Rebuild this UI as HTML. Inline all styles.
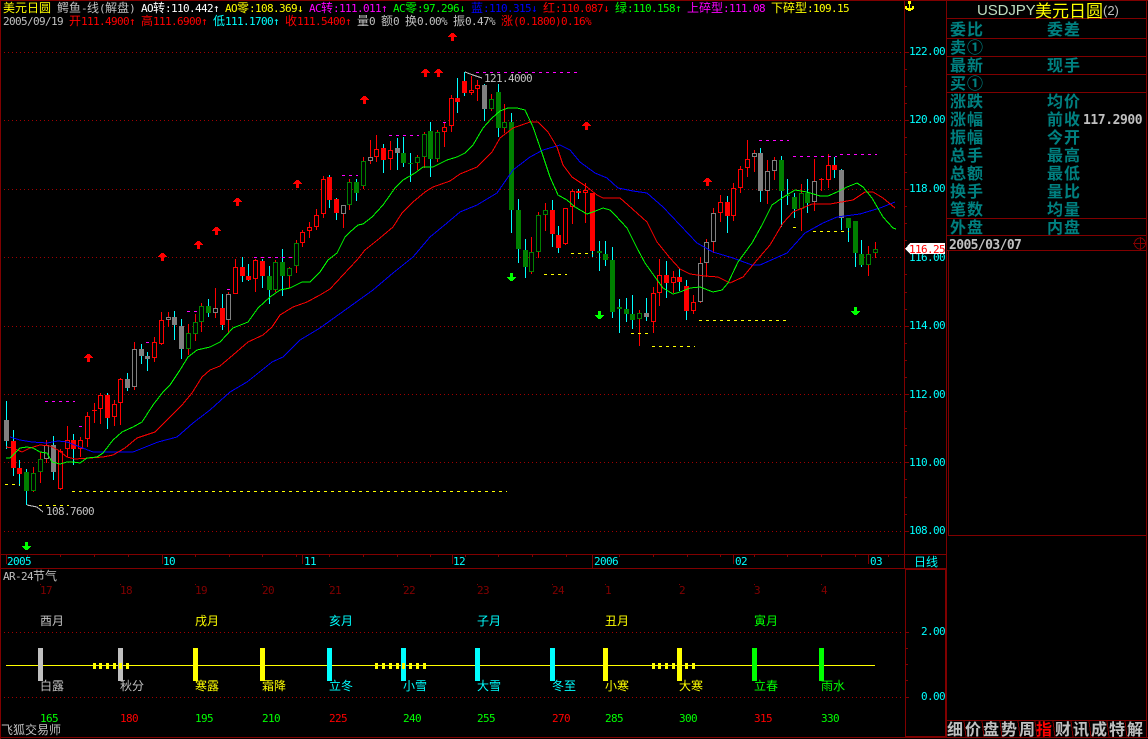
<!DOCTYPE html>
<html><head><meta charset="utf-8"><title>USDJPY</title>
<style>
html,body{margin:0;padding:0;background:#000;width:1148px;height:739px;overflow:hidden}
svg{display:block}
text{font-family:"DejaVu Sans Mono","Liberation Mono",monospace;font-size:11px;letter-spacing:-.62px;fill:#c0c0c0;white-space:pre}
.c{font-family:"WenQuanYi Zen Hei","Noto Sans CJK SC",sans-serif;font-size:12px;letter-spacing:0}
text.c{font-family:"WenQuanYi Zen Hei","Noto Sans CJK SC",sans-serif;font-size:12px;letter-spacing:0}
text.p{font-family:"WenQuanYi Zen Hei","Noto Sans CJK SC",sans-serif;font-size:16px;letter-spacing:1px;fill:#008080;font-weight:bold}
text.b{font-family:"WenQuanYi Zen Hei","Noto Sans CJK SC",sans-serif;font-size:16px;letter-spacing:0;fill:#c0c0c0;font-weight:bold}
.y{fill:#ff0}.w{fill:#fff}.m{fill:#f0f}.l{fill:#0f0}.bl{fill:#00f}.r{fill:#f00}.a{fill:#0ff}.d{fill:#800000}
text.y{fill:#ff0}text.w{fill:#fff}text.m{fill:#f0f}text.l{fill:#0f0}text.bl{fill:#00f}text.r{fill:#f00}text.a{fill:#0ff}text.d{fill:#800000}
</style></head>
<body>
<svg width="1148" height="739" viewBox="0 0 1148 739" xmlns="http://www.w3.org/2000/svg">
<defs>
<path id="ua" d="M-1 0h3v1h1v1h1v1h1v1h-3v4h-3v-4h-3v-1h1v-1h1v-1h1z"/>
<path id="da" d="M-1 0h3v4h3v1h-1v1h-1v1h-1v1h-3v-1h-1v-1h-1v-1h-1v-1h3z"/>
</defs>
<rect width="1148" height="739" fill="#000"/>

<!-- frames -->
<g fill="#800000" shape-rendering="crispEdges">
<rect x="0" y="0" width="1148" height="1"/>
<rect x="0" y="0" width="1" height="739"/>
<rect x="0" y="737" width="1148" height="1"/>
<rect x="1146" y="0" width="1" height="738"/>
<rect x="904" y="0" width="1" height="568"/>
<rect x="946" y="0" width="1" height="738"/>
<rect x="0" y="554" width="947" height="1"/>
<rect x="0" y="568" width="905" height="1"/>
<rect x="905" y="568" width="41" height="2"/>
<rect x="905" y="568" width="1" height="170"/>
<rect x="945" y="568" width="1" height="170"/>
<rect x="905" y="736" width="41" height="2"/>
<rect x="947" y="18" width="199" height="1"/>
<rect x="947" y="38" width="199" height="1"/>
<rect x="947" y="56" width="199" height="1"/>
<rect x="947" y="74" width="199" height="1"/>
<rect x="947" y="92" width="199" height="1"/>
<rect x="947" y="218" width="199" height="1"/>
<rect x="947" y="235" width="199" height="1"/>
<rect x="947" y="250" width="199" height="1"/>
<rect x="948" y="250" width="1" height="285"/>
<rect x="948" y="535" width="198" height="1"/>
<rect x="947" y="720" width="199" height="1"/>
</g>

<!-- grid -->
<g stroke="#a00000" stroke-width="1" stroke-dasharray="1 3" shape-rendering="crispEdges" fill="none">
<path d="M4 52.5H904M4 120.5H904M4 189.5H904M4 257.5H904M4 326.5H904M4 394.5H904M4 462.5H904M4 531.5H904M4 632.5H904M4 697.5H904"/>
</g>

<!-- axis ticks -->
<g stroke="#800000" fill="none" shape-rendering="crispEdges">
<path d="M905 52.5H909M905 120.5H909M905 189.5H909M905 326.5H909M905 394.5H909M905 462.5H909M905 531.5H909M905 69.5H907M905 86.5H907M905 103.5H907M905 137.5H907M905 154.5H907M905 172.5H907M905 206.5H907M905 223.5H907M905 240.5H907M905 274.5H907M905 292.5H907M905 309.5H907M905 343.5H907M905 360.5H907M905 377.5H907M905 411.5H907M905 428.5H907M905 445.5H907M905 479.5H907M905 497.5H907M905 514.5H907"/>
<path d="M905 632.5H909M906 648.5H908M906 664.5H908M906 680.5H908M905 697.5H909"/>
<path d="M6.5 555V564M162.5 555V564M302.5 555V564M452.5 555V564M592.5 555V568M733.5 555V564M868.5 555V564"/>
<path d="M27.5 555V557M60.5 555V557M94.5 555V557M128.5 555V557M195.5 555V557M229.5 555V557M262.5 555V557M296.5 555V557M329.5 555V557M363.5 555V557M397.5 555V557M430.5 555V557M465.5 555V557M498.5 555V557M532.5 555V557M566.5 555V557M619.5 555V557M653.5 555V557M687.5 555V557M720.5 555V557M754.5 555V557M787.5 555V557M821.5 555V557M855.5 555V557M888.5 555V557"/>
</g>

<!-- candle wicks -->
<g fill="none" stroke-width="1" shape-rendering="crispEdges">
<path stroke="#0ff" d="M6.5 401V449M13.5 430V476M19.5 460V486M26.5 469V505M53.5 436V480M73.5 434V465M107.5 393V429M127.5 373V391M141.5 344V364M147.5 352V371M174.5 311V340M181.5 319V359M208.5 299V317M222.5 294V330M242.5 257V282M248.5 264V281M262.5 259V288M269.5 266V304M282.5 249V296M329.5 175V208M336.5 198V220M356.5 179V201M383.5 144V173M397.5 138V170M403.5 137V167M410.5 153V182M430.5 122V177M457.5 78V113M464.5 72V96M484.5 84V121M498.5 84V137M511.5 113V233M518.5 199V263M525.5 239V278M552.5 200V247M558.5 226V253M578.5 189V199M592.5 193V257M599.5 241V271M605.5 241V266M612.5 247V318M619.5 299V333M626.5 298V322M632.5 295V329M646.5 298V321M666.5 261V298M679.5 268V291M686.5 280V320M727.5 196V233M760.5 148V202M781.5 156V227M787.5 179V205M794.5 193V218M807.5 179V213M834.5 157V178M841.5 169V230M848.5 218V242M855.5 221V267M861.5 240V267"/>
<path stroke="#f00" d="M33.5 467V492M40.5 452V483M46.5 440V463M60.5 449V490M67.5 426V457M80.5 437V457M87.5 412V447M94.5 403V423M100.5 393V424M114.5 400V426M120.5 378V425M134.5 342V390M154.5 337V362M161.5 312V345M168.5 312V327M188.5 324V355M195.5 314V341M201.5 303V332M215.5 288V318M228.5 292V333M235.5 259V294M255.5 259V292M275.5 260V292M289.5 267V288M296.5 240V273M302.5 230V247M309.5 222V238M316.5 209V230M323.5 176V218M343.5 205V228M349.5 179V210M363.5 157V189M370.5 140V164M376.5 135V162M390.5 141V170M417.5 155V170M424.5 132V168M437.5 130V162M444.5 123V147M451.5 95V132M471.5 76V95M477.5 80V101M491.5 94V111M504.5 104V133M531.5 237V274M538.5 212V258M545.5 203V231M565.5 208V245M572.5 189V224M585.5 183V223M639.5 310V346M653.5 287V333M659.5 259V306M673.5 271V293M693.5 295V314M700.5 257V303M706.5 239V277M713.5 208V253M720.5 195V222M733.5 183V221M740.5 166V193M747.5 140V177M754.5 150V172M767.5 160V204M774.5 157V180M801.5 184V231M814.5 159V211M821.5 178V191M828.5 154V188M868.5 246V276M875.5 242V258"/>
</g>

<!-- candle bodies -->
<g shape-rendering="crispEdges">
<path fill="#f00" d="M11 441h5V468h-5zM17 468h5V474h-5zM71 440h5V449h-5zM92 410h5V411h-5zM105 395h5V418h-5zM220 308h5V325h-5zM240 267h5V276h-5zM246 276h5V280h-5zM260 261h5V276h-5zM327 177h5V200h-5zM334 199h5V213h-5zM381 148h5V160h-5zM455 98h5V102h-5zM462 81h5V93h-5zM550 210h5V234h-5zM556 235h5V248h-5zM576 191h5V193h-5zM590 193h5V251h-5zM664 275h5V283h-5zM677 277h5V282h-5zM684 286h5V311h-5zM725 202h5V216h-5zM819 179h5V180h-5zM832 165h5V170h-5z"/>
<path fill="#008000" d="M24 472h5V491h-5zM206 306h5V313h-5zM267 276h5V290h-5zM280 262h5V276h-5zM354 182h5V193h-5zM401 153h5V163h-5zM408 163h5V164h-5zM428 131h5V159h-5zM496 92h5V128h-5zM509 122h5V210h-5zM516 210h5V249h-5zM523 250h5V267h-5zM597 251h5V253h-5zM603 254h5V260h-5zM610 260h5V312h-5zM617 307h5V309h-5zM624 309h5V314h-5zM630 314h5V320h-5zM779 160h5V191h-5zM785 195h5V196h-5zM792 197h5V209h-5zM805 193h5V203h-5zM846 218h5V228h-5zM853 221h5V253h-5zM859 254h5V265h-5z"/>
<path fill="#808080" d="M4 420h5V441h-5zM51 445h5V472h-5zM125 379h5V388h-5zM139 349h5V356h-5zM145 356h5V359h-5zM172 317h5V325h-5zM179 326h5V349h-5zM395 148h5V153h-5zM482 85h5V109h-5zM644 313h5V317h-5zM758 153h5V191h-5zM839 170h5V218h-5z"/>
<path fill="#000" stroke="#f00" d="M58.5 451.5h4V488.5h-4zM65.5 440.5h4V448.5h-4zM78.5 440.5h4V448.5h-4zM85.5 416.5h4V438.5h-4zM98.5 395.5h4V408.5h-4zM112.5 404.5h4V416.5h-4zM118.5 379.5h4V402.5h-4zM152.5 342.5h4V357.5h-4zM159.5 320.5h4V343.5h-4zM233.5 267.5h4V293.5h-4zM253.5 260.5h4V278.5h-4zM300.5 232.5h4V242.5h-4zM307.5 227.5h4V230.5h-4zM314.5 215.5h4V226.5h-4zM321.5 179.5h4V213.5h-4zM374.5 149.5h4V156.5h-4zM388.5 150.5h4V158.5h-4zM442.5 127.5h4V131.5h-4zM449.5 98.5h4V125.5h-4zM469.5 90.5h4V92.5h-4zM475.5 85.5h4V88.5h-4zM563.5 208.5h4V243.5h-4zM570.5 191.5h4V206.5h-4zM583.5 190.5h4V192.5h-4zM651.5 293.5h4V321.5h-4zM657.5 275.5h4V292.5h-4zM671.5 277.5h4V282.5h-4zM691.5 302.5h4V310.5h-4zM718.5 202.5h4V212.5h-4zM731.5 188.5h4V215.5h-4zM738.5 169.5h4V187.5h-4zM745.5 159.5h4V167.5h-4zM826.5 165.5h4V179.5h-4z"/>
<path fill="#000" stroke="#008000" d="M31.5 473.5h4V490.5h-4zM38.5 459.5h4V471.5h-4zM186.5 333.5h4V348.5h-4zM193.5 322.5h4V333.5h-4zM199.5 306.5h4V321.5h-4zM273.5 262.5h4V289.5h-4zM287.5 268.5h4V275.5h-4zM294.5 243.5h4V265.5h-4zM347.5 182.5h4V204.5h-4zM361.5 161.5h4V185.5h-4zM415.5 157.5h4V162.5h-4zM422.5 134.5h4V156.5h-4zM435.5 132.5h4V158.5h-4zM489.5 99.5h4V108.5h-4zM502.5 122.5h4V127.5h-4zM529.5 252.5h4V271.5h-4zM536.5 215.5h4V251.5h-4zM543.5 210.5h4V214.5h-4zM637.5 313.5h4V318.5h-4zM799.5 193.5h4V208.5h-4zM866.5 254.5h4V264.5h-4zM873.5 249.5h4V252.5h-4z"/>
<path fill="#000" stroke="#808080" d="M44.5 445.5h4V458.5h-4zM132.5 349.5h4V386.5h-4zM166.5 317.5h4V319.5h-4zM213.5 308.5h4V312.5h-4zM226.5 294.5h4V319.5h-4zM341.5 205.5h4V213.5h-4zM368.5 157.5h4V160.5h-4zM698.5 263.5h4V301.5h-4zM704.5 242.5h4V262.5h-4zM711.5 213.5h4V241.5h-4zM752.5 153.5h4V156.5h-4zM765.5 171.5h4V190.5h-4zM772.5 160.5h4V170.5h-4zM812.5 181.5h4V201.5h-4z"/>
</g>

<!-- moving averages -->
<g fill="none" stroke-width="1" shape-rendering="crispEdges">
<polyline stroke="#0000ff" points="10,437 20,440 32,442 47,443 58,441 67,442 80,447 93,452 107,452 133,452 143,448 158,442 177,437 193,423 210,410 230,392 247,382 272,362 283,357 300,340 320,328 373,290 393,273 413,257 430,237 447,223 460,212 477,205 497,193 513,170 530,157 543,150 560,145 570,150 580,162 595,173 607,178 618,188 633,191 647,193 663,207 680,225 697,243 713,252 733,258 752,265 760,265 787,253 805,233 823,223 837,217 860,214 880,208 895,202"/>
<polyline stroke="#ff0000" points="6,447 13,448 22,452 30,448 40,445 50,446 58,450 67,457 75,459 90,458 103,457 113,455 125,448 137,438 155,432 170,417 182,405 192,393 202,377 210,370 220,366 233,355 248,342 263,335 272,327 280,315 293,307 307,302 320,295 330,289 343,275 357,260 365,250 380,238 393,227 402,213 413,202 425,192 433,187 450,181 460,174 477,167 492,152 500,138 513,128 530,122 538,122 548,132 557,147 563,165 572,177 587,187 597,195 603,198 620,198 628,205 647,222 657,242 670,258 680,269 690,274 705,276 718,277 730,283 743,277 757,260 770,245 783,223 793,212 812,204 830,204 853,200 865,192 873,192 883,198 895,208"/>
<polyline stroke="#00ff00" points="6,458 10,458 15,453 20,448 27,447 33,448 40,452 47,453 52,462 60,464 67,462 73,462 80,463 87,458 97,457 103,453 113,440 122,432 133,427 142,422 153,405 163,392 170,385 180,370 188,357 197,350 210,347 220,342 233,328 248,322 258,308 270,297 280,290 290,288 302,282 310,282 320,272 328,260 337,253 345,237 350,232 358,225 363,224 372,217 383,205 395,188 403,180 415,173 423,167 433,167 447,160 457,157 465,153 473,145 483,128 492,118 500,111 508,108 517,108 525,110 533,127 542,153 550,177 558,195 567,200 575,207 587,214 593,212 603,208 610,210 615,215 627,228 637,248 645,263 655,277 663,288 673,294 680,292 690,288 700,287 713,292 722,290 728,283 738,262 752,243 762,225 772,205 782,198 795,190 807,192 820,196 828,196 837,192 847,187 857,183 863,187 872,198 883,217 893,228 896,229"/>
</g>

<!-- fractal dashes -->
<g fill="none" stroke-dasharray="3 4" shape-rendering="crispEdges">
<path stroke="#f0f" d="M45 401.5H75M79 426.5H82M146 342.5H149M187 311.5H197M227 289.5H230M254 257.5H292M342 175.5H358M389 135.5H419M443 122.5H446M476 72.5H580M759 140.5H789M793 156.5H837M840 154.5H877"/>
<path stroke="#ff0" d="M5 484.5H20M39 505.5H69M72 491.5H507M544 274.5H567M571 253.5H593M631 333.5H648M652 346.5H695M699 320.5H790M793 227.5H800M813 231.5H849"/>
</g>

<!-- arrows -->
<g fill="#f00" shape-rendering="crispEdges">
<use href="#ua" x="452" y="33"/><use href="#ua" x="425" y="69"/><use href="#ua" x="438" y="69"/><use href="#ua" x="364" y="96"/><use href="#ua" x="586" y="122"/><use href="#ua" x="707" y="178"/><use href="#ua" x="297" y="180"/><use href="#ua" x="237" y="198"/><use href="#ua" x="216" y="227"/><use href="#ua" x="198" y="241"/><use href="#ua" x="162" y="253"/><use href="#ua" x="88" y="354"/>
</g>
<g fill="#0f0" shape-rendering="crispEdges">
<use href="#da" x="511" y="273"/><use href="#da" x="599" y="311"/><use href="#da" x="855" y="307"/><use href="#da" x="26" y="542"/>
</g>

<!-- leaders -->
<polyline fill="none" stroke="#c0c0c0" shape-rendering="crispEdges" points="465,72 473,75 482,78"/>
<polyline fill="none" stroke="#c0c0c0" shape-rendering="crispEdges" points="27,505 37,507 43,512"/>
<text x="484" y="82">121.4000</text>
<text x="46" y="515">108.7600</text>

<!-- header lines -->
<text x="3" y="12" class="c y">美元日圆</text>
<text x="57" y="12"><tspan class="c">鳄鱼</tspan>-<tspan class="c">线</tspan>(<tspan class="c">解盘</tspan>)</text>
<text x="141" y="12" class="w">AO<tspan class="c w">转</tspan>:110.442↑</text>
<text x="225" y="12" class="y">AO<tspan class="c y">零</tspan>:108.369↓</text>
<text x="309" y="12" class="m">AC<tspan class="c m">转</tspan>:111.011↑</text>
<text x="393" y="12" class="l">AC<tspan class="c l">零</tspan>:97.296↓</text>
<text x="471" y="12" class="bl"><tspan class="c bl">蓝</tspan>:110.315↓</text>
<text x="543" y="12" class="r"><tspan class="c r">红</tspan>:110.087↓</text>
<text x="615" y="12" class="l"><tspan class="c l">绿</tspan>:110.158↑</text>
<text x="687" y="12" class="m"><tspan class="c m">上碎型</tspan>:111.08</text>
<text x="771" y="12" class="y"><tspan class="c y">下碎型</tspan>:109.15</text>

<text x="3" y="25">2005/09/19</text>
<text x="69" y="25" class="r"><tspan class="c r">开</tspan>111.4900↑</text>
<text x="141" y="25" class="r"><tspan class="c r">高</tspan>111.6900↑</text>
<text x="213" y="25" class="a"><tspan class="c a">低</tspan>111.1700↑</text>
<text x="285" y="25" class="r"><tspan class="c r">收</tspan>111.5400↑</text>
<text x="357" y="25"><tspan class="c">量</tspan>0</text>
<text x="381" y="25"><tspan class="c">额</tspan>0</text>
<text x="405" y="25"><tspan class="c">换</tspan>0.00%</text>
<text x="453" y="25"><tspan class="c">振</tspan>0.47%</text>
<text x="501" y="25" class="r"><tspan class="c r">涨</tspan>(0.1800)0.16%</text>

<!-- anchor -->
<g fill="#ff0" shape-rendering="crispEdges">
<rect x="908" y="1" width="3" height="3"/>
<rect x="909" y="2" width="1" height="9"/>
<rect x="905" y="6" width="2" height="3"/>
<rect x="912" y="6" width="2" height="3"/>
<rect x="906" y="8" width="7" height="2"/>
<rect x="908" y="10" width="3" height="1"/>
</g>

<!-- axis labels -->
<g class="a">
<text x="909" y="55" class="a">122.00</text>
<text x="909" y="123" class="a">120.00</text>
<text x="909" y="192" class="a">118.00</text>
<text x="909" y="261" class="a">116.00</text>
<text x="909" y="329" class="a">114.00</text>
<text x="909" y="398" class="a">112.00</text>
<text x="909" y="466" class="a">110.00</text>
<text x="909" y="534" class="a">108.00</text>
<text x="921" y="635" class="a">2.00</text>
<text x="921" y="700" class="a">0.00</text>
</g>
<path d="M905 249L910 243H945V254H910z" fill="#fff" shape-rendering="crispEdges"/>
<text x="909" y="253" class="r">116.25</text>

<!-- date ruler -->
<text x="7" y="565" class="a">2005</text>
<text x="163" y="565" class="a">10</text>
<text x="304" y="565" class="a">11</text>
<text x="453" y="565" class="a">12</text>
<text x="594" y="565" class="a">2006</text>
<text x="735" y="565" class="a">02</text>
<text x="870" y="565" class="a">03</text>
<text x="914" y="566" class="c a">日线</text>

<!-- right panel -->
<text x="977" y="15" style="font-family:'Liberation Sans',sans-serif;font-size:15px;letter-spacing:-.1px;fill:#c0dcc0">USDJPY</text>
<text x="1035" y="17" style="font-family:'WenQuanYi Zen Hei','Noto Sans CJK SC',sans-serif;font-size:17px;letter-spacing:0;fill:#ff0">美元日圆</text>
<text x="1103" y="15" style="font-family:'Liberation Sans',sans-serif;font-size:13px;letter-spacing:0;fill:#c0c0c0">(2)</text>
<text x="950" y="35" class="p">委比</text><text x="1047" y="35" class="p">委差</text>
<text x="950" y="53" class="p">卖①</text>
<text x="950" y="71" class="p">最新</text><text x="1047" y="71" class="p">现手</text>
<text x="950" y="89" class="p">买①</text>
<text x="950" y="107" class="p">涨跌</text><text x="1047" y="107" class="p">均价</text>
<text x="950" y="125" class="p">涨幅</text><text x="1047" y="125" class="p">前收</text>
<text x="950" y="143" class="p">振幅</text><text x="1047" y="143" class="p">今开</text>
<text x="950" y="161" class="p">总手</text><text x="1047" y="161" class="p">最高</text>
<text x="950" y="179" class="p">总额</text><text x="1047" y="179" class="p">最低</text>
<text x="950" y="197" class="p">换手</text><text x="1047" y="197" class="p">量比</text>
<text x="950" y="215" class="p">笔数</text><text x="1047" y="215" class="p">均量</text>
<text x="950" y="233" class="p">外盘</text><text x="1047" y="233" class="p">内盘</text>
<text x="1083" y="124" style="font-size:13px;font-weight:bold;letter-spacing:-.43px;fill:#c0c0c0">117.2900</text>
<text x="949" y="249" style="font-size:13px;font-weight:bold;letter-spacing:-.6px;fill:#c0c0c0">2005/03/07</text>
<g fill="none" stroke="#800000" shape-rendering="crispEdges">
<circle cx="1140" cy="243.5" r="5.5"/><path d="M1133 243.5H1147M1140.5 237V250"/>
</g>

<!-- lower pane -->
<text x="3" y="580">AR-24<tspan class="c">节气</tspan></text>
<g shape-rendering="crispEdges">
<rect x="6" y="665" width="869" height="1" fill="#ff0"/>
<path fill="#c0c0c0" d="M38 648h5v33h-5zM118 648h5v33h-5z"/>
<path fill="#ff0" d="M193 648h5v33h-5zM260 648h5v33h-5zM603 648h5v33h-5zM677 648h5v33h-5z"/>
<path fill="#0ff" d="M327 648h5v33h-5zM401 648h5v33h-5zM475 648h5v33h-5zM550 648h5v33h-5z"/>
<path fill="#0f0" d="M752 648h5v33h-5zM819 648h5v33h-5z"/>
<path fill="#ff0" d="M93 663h3v6h-3zM99 663h3v6h-3zM106 663h3v6h-3zM113 663h3v6h-3zM119 663h3v6h-3zM126 663h3v6h-3zM375 663h3v6h-3zM382 663h3v6h-3zM389 663h3v6h-3zM396 663h3v6h-3zM402 663h3v6h-3zM409 663h3v6h-3zM416 663h3v6h-3zM423 663h3v6h-3zM652 663h3v6h-3zM658 663h3v6h-3zM665 663h3v6h-3zM672 663h3v6h-3zM679 663h3v6h-3zM685 663h3v6h-3zM692 663h3v6h-3z"/>
<path fill="#800000" d="M40 584h1v1h-1zM120 584h1v1h-1zM195 584h1v1h-1zM262 584h1v1h-1zM329 584h1v1h-1zM403 584h1v1h-1zM477 584h1v1h-1zM552 584h1v1h-1zM605 584h1v1h-1zM679 584h1v1h-1zM754 584h1v1h-1zM821 584h1v1h-1z"/>
</g>
<text x="40" y="594" class="d">17</text><text x="120" y="594" class="d">18</text><text x="195" y="594" class="d">19</text><text x="262" y="594" class="d">20</text><text x="329" y="594" class="d">21</text><text x="403" y="594" class="d">22</text><text x="477" y="594" class="d">23</text><text x="552" y="594" class="d">24</text><text x="605" y="594" class="d">1</text><text x="679" y="594" class="d">2</text><text x="754" y="594" class="d">3</text><text x="821" y="594" class="d">4</text>

<text x="40" y="625" class="c">酉月</text>
<text x="195" y="625" class="c y">戌月</text>
<text x="329" y="625" class="c a">亥月</text>
<text x="477" y="625" class="c a">子月</text>
<text x="605" y="625" class="c y">丑月</text>
<text x="754" y="625" class="c l">寅月</text>

<text x="40" y="690" class="c">白露</text>
<text x="120" y="690" class="c">秋分</text>
<text x="195" y="690" class="c y">寒露</text>
<text x="262" y="690" class="c y">霜降</text>
<text x="329" y="690" class="c a">立冬</text>
<text x="403" y="690" class="c a">小雪</text>
<text x="477" y="690" class="c a">大雪</text>
<text x="552" y="690" class="c a">冬至</text>
<text x="605" y="690" class="c y">小寒</text>
<text x="679" y="690" class="c y">大寒</text>
<text x="754" y="690" class="c l">立春</text>
<text x="821" y="690" class="c l">雨水</text>

<text x="40" y="722" class="l">165</text><text x="120" y="722" class="r">180</text><text x="195" y="722" class="l">195</text><text x="262" y="722" class="l">210</text><text x="329" y="722" class="r">225</text><text x="403" y="722" class="l">240</text><text x="477" y="722" class="l">255</text><text x="552" y="722" class="r">270</text><text x="605" y="722" class="l">285</text><text x="679" y="722" class="l">300</text><text x="754" y="722" class="r">315</text><text x="821" y="722" class="l">330</text>

<text x="1" y="734" class="c">飞狐交易师</text>

<!-- bottom tabs -->
<g stroke="#800000" fill="none" shape-rendering="crispEdges">
<path d="M964 721L966 737M982 721L984 737M1000 721L1002 737M1018 721L1020 737M1035 721L1037 737M1053 721L1055 737M1071 721L1073 737M1089 721L1091 737M1107 721L1109 737M1125 721L1127 737"/>
</g>
<text x="947" y="735" class="b">细</text><text x="965" y="735" class="b">价</text><text x="983" y="735" class="b">盘</text><text x="1001" y="735" class="b">势</text><text x="1019" y="735" class="b">周</text>
<text x="1036" y="735" class="b" style="fill:#f00">指</text>
<text x="1055" y="735" class="b">财</text><text x="1073" y="735" class="b">讯</text><text x="1091" y="735" class="b">成</text><text x="1109" y="735" class="b">特</text><text x="1127" y="735" class="b">解</text>
</svg>
</body></html>
